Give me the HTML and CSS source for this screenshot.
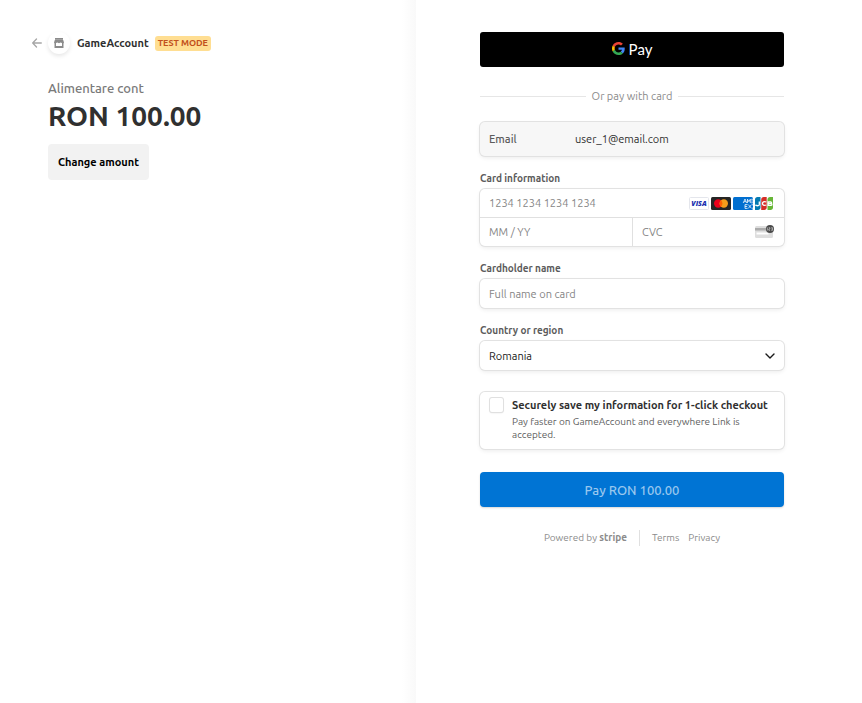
FILE: index.html
```html
<!DOCTYPE html>
<html lang="en">
<head>
<meta charset="utf-8">
<meta name="viewport" content="width=device-width, initial-scale=1">
<title>GameAccount checkout</title>
<link rel="stylesheet" href="styles.css">
</head>
<body>
<div class="checkout">
  <section class="summary">
    <header class="merchant">
      <a class="back" href="#" aria-label="Back">
        <svg width="10" height="10" viewBox="0 0 10 10" fill="none" stroke="#a6a6a6" stroke-width="1.3" stroke-linecap="round" stroke-linejoin="round"><path d="M9.3 5H.8M4.5 1 .7 5l3.8 4"/></svg>
      </a>
      <span class="avatar">
        <svg width="10" height="10" viewBox="0 0 10 10" fill="#8b8b8b"><path d="M1 0h8v1.800H1z"/><path fill-rule="evenodd" d="M.8 2h8.400L10 4.500 9.500 5.500V10H.5V5.500L0 4.500zM2 5V8h6V5L6.500 4.600 5 5.200 3.500 4.600z"/></svg>
      </span>
      <h1 class="merchant-name">GameAccount</h1>
      <span class="badge">TEST MODE</span>
    </header>
    <p class="product">Alimentare cont</p>
    <p class="amount">RON 100.00</p>
    <button class="change" type="button">Change amount</button>
  </section>

  <main class="payment">
    <form>
      <button class="gpay" type="button" aria-label="Google Pay">
        <svg class="g-logo" width="13" height="13" viewBox="0 0 48 48">
          <path fill="#ea4335" d="M24 9.500c3.540 0 6.710 1.220 9.210 3.600l6.850-6.850C35.900 2.380 30.470 0 24 0 14.620 0 6.510 5.380 2.560 13.220l7.980 6.190C12.430 13.720 17.740 9.500 24 9.500z"/>
          <path fill="#4285f4" d="M46.980 24.550c0-1.570-.15-3.090-.38-4.550H24v9.020h12.940c-.58 2.960-2.260 5.480-4.780 7.180l7.730 6c4.510-4.180 7.090-10.360 7.090-17.650z"/>
          <path fill="#fbbc05" d="M10.530 28.590c-.48-1.450-.76-2.990-.76-4.590s.27-3.140.76-4.590l-7.980-6.190C.92 16.460 0 20.120 0 24s.92 7.540 2.560 10.780z"/>
          <path fill="#34a853" d="M24 48c6.480 0 11.930-2.130 15.890-5.810l-7.730-6c-2.150 1.450-4.920 2.300-8.160 2.300-6.260 0-11.570-4.220-13.470-9.910l-7.980 6.190C6.510 42.620 14.620 48 24 48z"/>
        </svg>
        <span>Pay</span>
      </button>

      <div class="divider">Or pay with card</div>

      <div class="box email">
        <span class="email-label">Email</span>
        <span>user_1@email.com</span>
      </div>

      <label class="label" for="number">Card information</label>
      <div class="box card">
        <div class="card-row">
          <input class="field" id="number" type="text" placeholder="1234 1234 1234 1234">
          <span class="brands">
            <svg width="20" height="13" viewBox="0 0 20 13"><rect x=".5" y=".5" width="19" height="12" rx="1" fill="#fff" stroke="#e4e6ec"/><text x="10" y="9.300" text-anchor="middle" class="visa">VISA</text></svg>
            <svg width="20" height="13" viewBox="0 0 20 13"><rect width="20" height="13" rx="1.500" fill="#252525"/><circle cx="7.200" cy="6.500" r="4.200" fill="#eb001b"/><circle cx="12.800" cy="6.500" r="4.200" fill="#f79e1b"/><path d="M10 3.370a4.200 4.200 0 0 1 0 6.260 4.200 4.200 0 0 1 0-6.260z" fill="#ff5f00"/></svg>
            <svg width="20" height="13" viewBox="0 0 20 13"><rect width="20" height="13" rx="1.500" fill="#016fd0"/><g fill="none" stroke="#fff" stroke-width=".9" stroke-opacity=".85"><path d="m10.200 6 1.800-4 1.800 4m-2.800-1.300h2M14.500 6V2.200l1.400 2.500 1.400-2.500V6M18.200 2.300H20M18.200 4H20M18.200 5.800H20"/><path d="M14.500 7.600H12v3.800h2.500M12 9.500h2.200M15.300 7.600l3.200 3.800m0-3.800-3.200 3.800M19 7.800h1M19 11.200h1"/></g></svg>
            <svg width="18" height="13" viewBox="0 0 18 13"><path fill="#047ab1" d="M2.500 0h3v10.500C5.500 12 4.500 13 3 13H0V2.500C0 1 1 0 2.500 0z"/><path fill="#d42d27" d="M8.700 0h3v10.500c0 1.500-1 2.500-2.500 2.500h-3V2.500c0-1.500 1-2.500 2.500-2.500z"/><path fill="#67b637" d="M15 0h3v10.500c0 1.500-1 2.500-2.500 2.500h-3V2.500c0-1.500 1-2.500 2.500-2.500z"/><path fill="none" stroke="#fff" stroke-width="1.300" d="M4.300 4.500v3C4.300 9 2.500 9 .3 8.200M11.300 5C9 4.200 7.500 4.900 7.500 6.500S9 8.800 11.300 8M13.200 4.800h2.400c1.300 0 1.300 1.700 0 1.700h-2.400m0 0h2.700c1.400 0 1.400 1.900 0 1.900h-2.700V4.200"/></svg>
          </span>
        </div>
        <div class="card-row split">
          <input class="field" type="text" placeholder="MM / YY" aria-label="Expiry date">
          <div class="cvc">
            <input class="field" type="text" placeholder="CVC" aria-label="CVC">
            <svg width="20" height="14" viewBox="0 0 20 14"><rect y="1" width="18" height="12" rx="1.500" fill="#dedede"/><path d="M0 3h18v2.500H0z" fill="#ababab"/><path d="M1.500 7.500h12v2h-12z" fill="#fff"/><circle cx="15" cy="4" r="4" fill="#4a4a4a"/><path d="M12.400 2.500v3M13.700 2.700h1.200V4h-1.100v1.300h1.300M16.200 2.700h1.400v2.600h-1.400m.2-1.300h1.200" fill="none" stroke="#ddd" stroke-width=".6"/></svg>
          </div>
        </div>
      </div>

      <label class="label" for="name">Cardholder name</label>
      <input class="box field single" id="name" type="text" placeholder="Full name on card">

      <label class="label" for="country">Country or region</label>
      <div class="select-wrap">
        <select class="box single" id="country"><option>Romania</option></select>
        <svg class="chevron" width="10" height="6" viewBox="0 0 10 6" fill="none" stroke="#1a1a1a" stroke-width="1.400" stroke-linecap="round" stroke-linejoin="round"><path d="m1 1 4 4 4-4"/></svg>
      </div>

      <div class="box save">
        <input class="tick" id="save" type="checkbox">
        <div>
          <label class="save-title" for="save">Securely save my information for 1-click checkout</label>
          <p class="save-note">Pay faster on GameAccount and everywhere Link is accepted.</p>
        </div>
      </div>

      <button class="pay" type="submit">Pay RON 100.00</button>
    </form>
    <footer class="footer">
      <a class="powered" href="#">Powered by <strong>stripe</strong></a>
      <nav class="links"><a href="#">Terms</a><a href="#">Privacy</a></nav>
    </footer>
  </main>
</div>
</body>
</html>
```
FILE: styles.css
```css
* { box-sizing: border-box; }
body, h1, p { margin: 0; }
body {
  font: 11px/14px Ubuntu, "Noto Sans", sans-serif;
  color: #303030;
  background: #fff;
}
button, input, select { font: inherit; margin: 0; border: 0; }
svg { flex: none; display: block; }
a { color: inherit; text-decoration: none; }

.checkout {
  display: grid;
  grid-template-columns: 416fr 446fr;
  min-height: 100vh;
}
.summary {
  padding: 32px 64px 32px 48px;
  background: linear-gradient(to left, #f9f9f9, #fff 14px);
}
.payment { padding: 32px 78px 32px 64px; }

.merchant { display: flex; align-items: center; height: 22px; margin-left: -16px; }
.back { width: 16px; }
.avatar {
  display: grid;
  place-items: center;
  width: 22px;
  height: 22px;
  margin-right: 7px;
  border-radius: 50%;
  box-shadow: 0 2px 4px rgba(0, 0, 0, .1);
}
.merchant-name { font-size: 11px; font-weight: 600; color: #303030; }
.badge {
  margin-left: 6px;
  padding: 0 3px 1px;
  border-radius: 3px;
  background: #ffde92;
  color: #c2501c;
  font-size: 9px;
  font-weight: 700;
}
.product { margin-top: 25px; font-size: 13px; line-height: 18px; font-weight: 500; color: #7a7a7a; }
.amount { font-size: 28px; line-height: 38px; font-weight: 700; }
.change {
  height: 36px;
  margin-top: 9px;
  padding: 0 10px;
  border-radius: 4px;
  background: #f2f2f2;
  color: #000;
  font-weight: 600;
}

.gpay {
  display: flex;
  align-items: center;
  justify-content: center;
  gap: 4px;
  width: 100%;
  height: 35px;
  padding: 0 0 2px;
  border-radius: 3px;
  background: #000;
  color: #fff;
  font: 15px/20px Lato, sans-serif;
}
.divider {
  display: flex;
  align-items: center;
  gap: 6px;
  margin: 22px 0 19px;
  color: #8b8b8b;
}
.divider::before, .divider::after { content: ""; flex: 1; height: 1px; background: #e6e6e6; }

.box {
  border-radius: 5px;
  background: #fff;
  box-shadow: 0 0 0 1px #e2e2e2, 0 2px 4px rgba(0, 0, 0, .08);
}
.email { display: flex; align-items: center; height: 34px; padding: 0 9px; background: #f7f7f7; }
.email-label { width: 86px; font-weight: 500; color: #5c5c5c; }
.label {
  display: block;
  margin: 16px 0 3px;
  font-size: 10px;
  font-weight: 600;
  color: #5c5c5c;
}
.field { width: 100%; padding: 0 9px; color: #303030; background: none; outline: none; }
.field::placeholder { color: #858585; opacity: 1; }
.single { display: block; width: 100%; height: 29px; background: #fff; }
.card-row { display: flex; align-items: center; height: 28px; }
.card-row .field { flex: 1; min-width: 0; }
.brands { display: flex; gap: 2px; padding-right: 11px; }
.split { display: grid; grid-template-columns: 1fr 1fr; height: 29px; border-top: 1px solid #e0e0e0; }
.cvc {
  display: flex;
  align-self: stretch;
  align-items: center;
  min-width: 0;
  padding-right: 9px;
  border-left: 1px solid #e0e0e0;
}
.visa { font: italic 800 7px "Open Sans", sans-serif; fill: #1a2fb0; }

.select-wrap { display: grid; align-items: center; }
.select-wrap > * { grid-area: 1 / 1; }
.select-wrap select { appearance: none; padding: 0 9px; color: #1a1a1a; }
.chevron { justify-self: end; margin-right: 9px; pointer-events: none; }

.save { display: flex; gap: 9px; margin-top: 22px; padding: 6px 10px 8px; }
.tick {
  appearance: none;
  flex: none;
  width: 13px;
  height: 14px;
  border-radius: 2px;
  background: #fff;
  box-shadow: 0 0 0 1px #e0e0e0, 0 1px 2px rgba(0, 0, 0, .12);
}
.save-title { display: block; font-weight: 600; color: #303030; }
.save-note { margin-top: 3px; font-size: 10px; line-height: 13px; color: #606060; }
.pay {
  display: block;
  width: 100%;
  height: 35px;
  margin-top: 23px;
  border-radius: 4px;
  background: #0074d4;
  color: #99c7ee;
  font-size: 13px;
  font-weight: 500;
  box-shadow: 0 1px 2px rgba(0, 0, 0, .16);
}
.footer {
  display: flex;
  justify-content: center;
  margin-top: 23px;
  font-size: 10px;
  line-height: 16px;
  color: #8b8b8b;
}
.powered { padding-right: 12px; border-right: 1px solid #e0e0e0; }
.links { display: flex; gap: 9px; padding-left: 12px; }
```
